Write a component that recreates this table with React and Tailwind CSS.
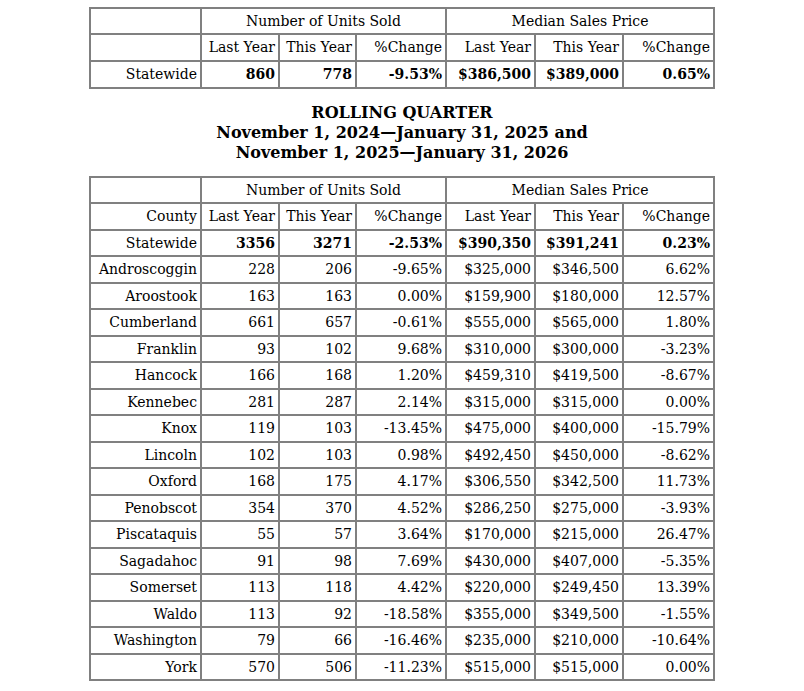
import React from 'react'

const cols = ['w-[111px]', 'w-[78px]', 'w-[77px]', 'w-[90px]', 'w-[89px]', 'w-[88px]', 'w-[91px]']

const counties = [
  ['Androscoggin', '228', '206', '-9.65%', '$325,000', '$346,500', '6.62%'],
  ['Aroostook', '163', '163', '0.00%', '$159,900', '$180,000', '12.57%'],
  ['Cumberland', '661', '657', '-0.61%', '$555,000', '$565,000', '1.80%'],
  ['Franklin', '93', '102', '9.68%', '$310,000', '$300,000', '-3.23%'],
  ['Hancock', '166', '168', '1.20%', '$459,310', '$419,500', '-8.67%'],
  ['Kennebec', '281', '287', '2.14%', '$315,000', '$315,000', '0.00%'],
  ['Knox', '119', '103', '-13.45%', '$475,000', '$400,000', '-15.79%'],
  ['Lincoln', '102', '103', '0.98%', '$492,450', '$450,000', '-8.62%'],
  ['Oxford', '168', '175', '4.17%', '$306,550', '$342,500', '11.73%'],
  ['Penobscot', '354', '370', '4.52%', '$286,250', '$275,000', '-3.93%'],
  ['Piscataquis', '55', '57', '3.64%', '$170,000', '$215,000', '26.47%'],
  ['Sagadahoc', '91', '98', '7.69%', '$430,000', '$407,000', '-5.35%'],
  ['Somerset', '113', '118', '4.42%', '$220,000', '$249,450', '13.39%'],
  ['Waldo', '113', '92', '-18.58%', '$355,000', '$349,500', '-1.55%'],
  ['Washington', '79', '66', '-16.46%', '$235,000', '$210,000', '-10.64%'],
  ['York', '570', '506', '-11.23%', '$515,000', '$515,000', '0.00%'],
]

const cell = 'border-2 border-[#808080] px-[3px] text-right whitespace-nowrap'

function Cols() {
  return (
    <colgroup>
      {cols.map((c, i) => <col key={i} className={c} />)}
    </colgroup>
  )
}

function HeadRows({ first }) {
  return (
    <>
      <tr className="h-[26px]">
        <td className={cell}></td>
        <td colSpan={3} className={cell + ' !text-center'}>Number of Units Sold</td>
        <td colSpan={3} className={cell + ' !text-center'}>Median Sales Price</td>
      </tr>
      <tr className="h-[27px]">
        <td className={cell}>{first}</td>
        <td className={cell}>Last Year</td>
        <td className={cell}>This Year</td>
        <td className={cell}>%Change</td>
        <td className={cell}>Last Year</td>
        <td className={cell}>This Year</td>
        <td className={cell}>%Change</td>
      </tr>
    </>
  )
}

function StateRow({ data, h }) {
  return (
    <tr className={h}>
      <td className={cell}>Statewide</td>
      {data.map((d, i) => <td key={i} className={cell + ' font-bold'}>{d}</td>)}
    </tr>
  )
}

export default function App() {
  return (
    <div className="min-h-screen bg-white text-black font-['DejaVu_Serif',serif] text-[14px] pt-[7px]">
      <table className="mx-auto border-collapse table-fixed w-[624px]">
        <Cols />
        <tbody>
          <HeadRows first="" />
          <StateRow h="h-[27px]" data={['860', '778', '-9.53%', '$386,500', '$389,000', '0.65%']} />
        </tbody>
      </table>

      <div className="text-center font-bold text-[16px] leading-[20px] mt-[14px] mb-[13px]">
        <div>ROLLING QUARTER</div>
        <div>November 1, 2024—January 31, 2025 and</div>
        <div>November 1, 2025—January 31, 2026</div>
      </div>

      <table className="mx-auto border-collapse table-fixed w-[624px]">
        <Cols />
        <tbody>
          <HeadRows first="County" />
          <StateRow h="h-[26px]" data={['3356', '3271', '-2.53%', '$390,350', '$391,241', '0.23%']} />
          {counties.map((r, i) => (
            <tr key={r[0]} className={i % 2 === 0 ? 'h-[27px]' : 'h-[26px]'}>
              {r.map((d, j) => <td key={j} className={cell}>{d}</td>)}
            </tr>
          ))}
        </tbody>
      </table>
    </div>
  )
}
